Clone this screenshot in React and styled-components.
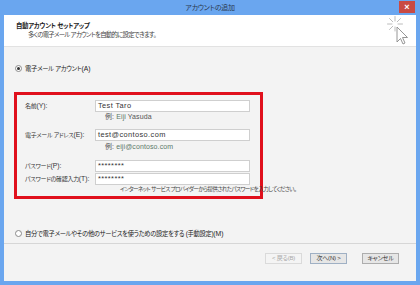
import React from 'react'
import styled, { createGlobalStyle } from 'styled-components'

const Global = createGlobalStyle`
    body {
        margin: 0;
        font-family: "Liberation Sans", "Noto Sans CJK JP", sans-serif;
        font-feature-settings: "palt";
        -webkit-font-smoothing: antialiased;
    }
`

const AutoIcon = () => (
    <svg width="28" height="31" viewBox="0 0 28 31">
        <g stroke="#b4b4b4" strokeWidth="0.9" strokeLinecap="round">
            <line x1="11" y1="1.5" x2="11" y2="6" />
            <line x1="11" y1="12" x2="11" y2="16" />
            <line x1="3.5" y1="9" x2="8" y2="9" />
            <line x1="14" y1="9" x2="18.5" y2="9" />
            <line x1="5.5" y1="3.5" x2="8.8" y2="6.8" />
            <line x1="13.2" y1="6.8" x2="16.5" y2="3.5" />
            <line x1="5.5" y1="14.5" x2="8.8" y2="11.2" />
        </g>
        <polygon
            points="13,12 13,27 16.5,23.5 19,29 21,28 18.5,22.5 23.5,22.5"
            fill="#fff"
            stroke="#8a8a8a"
            strokeWidth="0.9"
            strokeLinejoin="round"
        />
    </svg>
)

const App = () => {
    return (
        <>
            <Global />
            <Window>
                <TitleBar>
                    <span />
                    <Title>アカウントの追加</Title>
                    <CloseButton>×</CloseButton>
                </TitleBar>
                <Body>
                    <Header>
                        <HeaderText>
                            <HeaderTitle>自動アカウント セットアップ</HeaderTitle>
                            <HeaderSub>多くの電子メール アカウントを自動的に設定できます。</HeaderSub>
                        </HeaderText>
                        <IconWrap>
                            <AutoIcon />
                        </IconWrap>
                    </Header>
                    <Main>
                        <RadioRow>
                            <Radio checked />
                            <span>電子メール アカウント<Key>(A)</Key></span>
                        </RadioRow>
                        <FieldBox>
                            <Label>名前<Key>(Y):</Key></Label>
                            <Input>Test Taro</Input>
                            <Example>例: <Eg>Eiji</Eg> Yasuda</Example>

                            <Label $top={7}>電子メール アドレス<Key>(E):</Key></Label>
                            <Input $top={7}>test@contoso.com</Input>
                            <Example $top={1}>例: <Eg>eiji@contoso.com</Eg></Example>

                            <Label $top={8}>パスワード<Key>(P):</Key></Label>
                            <Input $top={8}>********</Input>
                            <Label $top={1}>パスワードの確認入力<Key>(T):</Key></Label>
                            <Input $top={1}>********</Input>
                            <Hint>インターネット サービス プロバイダーから提供されたパスワードを入力してください。</Hint>
                        </FieldBox>
                        <RadioRow $top={29}>
                            <Radio />
                            <span>自分で電子メールやその他のサービスを使うための設定をする (手動設定)<Key>(M)</Key></span>
                        </RadioRow>
                    </Main>
                    <Footer>
                        <Button disabled>&lt; 戻る(B)</Button>
                        <Button $primary>次へ(N) &gt;</Button>
                        <Button $gap={15}>キャンセル</Button>
                    </Footer>
                </Body>
            </Window>
        </>
    )
}

export default App

const Window = styled.div`
    width: 420px;
    height: 285px;
    background: #6aa6ef;
    display: flex;
    flex-direction: column;
`

const TitleBar = styled.div`
    height: 15px;
    display: grid;
    grid-template-columns: 1fr auto 1fr;
    align-items: start;
`

const Title = styled.div`
    font-size: 7px;
    line-height: 15px;
    color: #2a3a50;
    letter-spacing: -0.3px;
`

const CloseButton = styled.div`
    justify-self: end;
    margin: 1px 5px 0 0;
    width: 16px;
    height: 12px;
    background: #c94a43;
    color: #fff;
    font-size: 9px;
    font-weight: bold;
    line-height: 12px;
    text-align: center;
`

const Body = styled.div`
    flex: 1;
    margin: 0 4px 4px;
    background: #f3f3f3;
    display: flex;
    flex-direction: column;
    color: #333;
    font-size: 6px;
    letter-spacing: -0.3px;
`

const Key = styled.span`
    font-size: 6.8px;
    letter-spacing: 0;
`

const Header = styled.div`
    height: 31px;
    background: #fff;
    border-bottom: 1px solid #e2e2e2;
    display: flex;
    justify-content: space-between;
    align-items: flex-start;
    font-size: 6.4px;
`

const HeaderText = styled.div`
    padding: 6px 0 0 12px;
`

const HeaderTitle = styled.div`
    font-weight: bold;
    line-height: 9px;
    color: #222;
    letter-spacing: -0.3px;
`

const HeaderSub = styled.div`
    line-height: 9px;
    padding-left: 12px;
    color: #444;
    letter-spacing: -0.75px;
`

const IconWrap = styled.div`
    margin-right: 4px;
    height: 31px;
`

const Main = styled.div`
    flex: 1;
    padding: 16px 0 0 10px;
    display: flex;
    flex-direction: column;
    align-items: flex-start;
`

const RadioRow = styled.div`
    display: flex;
    align-items: center;
    gap: 3px;
    height: 10px;
    margin: ${p => p.$top || 0}px 0 0 1px;
    color: #222;
    white-space: nowrap;
    font-size: 6.3px;
    letter-spacing: -0.3px;
`

const Radio = styled.span`
    width: 5px;
    height: 5px;
    border: 1px solid #8a8a8a;
    border-radius: 50%;
    background: #fff;
    display: flex;
    align-items: center;
    justify-content: center;
    &::after {
        content: '';
        width: 3px;
        height: 3px;
        border-radius: 50%;
        background: ${p => (p.checked ? '#333' : 'transparent')};
    }
`

const FieldBox = styled.div`
    margin-top: 19px;
    width: 249px;
    box-sizing: border-box;
    border: 3px solid #e0101c;
    padding: 5px 0 2px 8px;
    display: grid;
    grid-template-columns: 70px 155px;
    align-items: center;
`

const Label = styled.div`
    grid-column: 1;
    margin-top: ${p => p.$top || 0}px;
    white-space: nowrap;
    line-height: 12px;
`

const Input = styled.div`
    grid-column: 2;
    margin-top: ${p => p.$top || 0}px;
    height: 12px;
    box-sizing: border-box;
    border: 1px solid #cfcfcf;
    background: #fff;
    font-size: 7.4px;
    line-height: 10px;
    padding-left: 2px;
    letter-spacing: 0.4px;
    color: #333;
`

const Example = styled.div`
    grid-column: 2;
    margin-top: ${p => p.$top || 0}px;
    padding-left: 10px;
    line-height: 10px;
    color: #555;
    font-size: 7px;
    letter-spacing: 0.1px;
`

const Eg = styled.span`
    color: #5d7a6a;
`

const Hint = styled.div`
    grid-column: 2;
    padding-left: 25px;
    line-height: 9px;
    white-space: nowrap;
    color: #444;
    font-size: 5.6px;
    letter-spacing: -0.6px;
`

const Footer = styled.div`
    height: 28px;
    border-top: 1px solid #d6d6d6;
    display: flex;
    justify-content: flex-end;
    align-items: flex-start;
    padding: 9px 17px 0 0;
`

const Button = styled.div`
    width: 37px;
    height: 11px;
    box-sizing: border-box;
    margin-left: ${p => p.$gap || 8}px;
    border: 1px solid ${p => (p.disabled ? '#dadada' : p.$primary ? '#9fb0c4' : '#adadad')};
    background: ${p => (p.disabled ? '#f4f4f4' : '#e6e6e6')};
    color: ${p => (p.disabled ? '#a8a8a8' : '#333')};
    font-size: 6px;
    line-height: 9px;
    text-align: center;
    white-space: nowrap;
    letter-spacing: -0.2px;
`
